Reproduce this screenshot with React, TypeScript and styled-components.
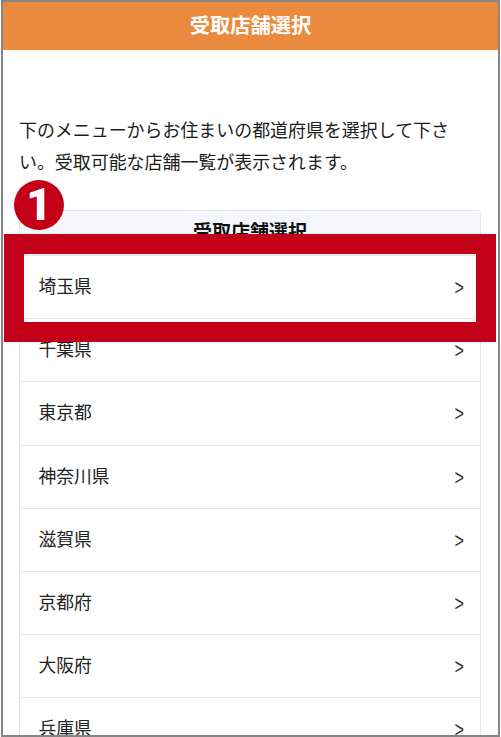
import React from 'react';
import styled, { createGlobalStyle } from 'styled-components';

const GlobalStyle = createGlobalStyle`
  html, body {
    margin: 0;
    padding: 0;
    background: #fff;
    font-family: "Liberation Sans", "Noto Sans CJK JP", sans-serif;
  }
`;

const prefectures = ['埼玉県', '千葉県', '東京都', '神奈川県', '滋賀県', '京都府', '大阪府', '兵庫県'];

export default function App() {
  return (
    <>
      <GlobalStyle />
      <Page>
        <Frame>
          <Header>受取店舗選択</Header>
          <Content>
            <Lead>下のメニューからお住まいの都道府県を選択して下さい。受取可能な店舗一覧が表示されます。</Lead>
            <Card>
              <CardTitle>受取店舗選択</CardTitle>
              {prefectures.map((name) => (
                <Row key={name}>
                  <span>{name}</span>
                  <Arrow>&gt;</Arrow>
                </Row>
              ))}
            </Card>
          </Content>
        </Frame>
        <Highlight />
        <StepBadge>1</StepBadge>
      </Page>
    </>
  );
}

const Page = styled.div`
  position: relative;
  width: 501px;
  height: 737px;
  overflow: hidden;
  background: #fff;
`;

const Frame = styled.div`
  box-sizing: border-box;
  width: 499px;
  height: 737px;
  margin-left: 1px;
  border: 2px solid #858585;
  overflow: hidden;
`;

const Header = styled.div`
  height: 48px;
  background: #ea8a3e;
  color: #fff;
  font-size: 20.3px;
  font-weight: 700;
  line-height: 48px;
  text-align: center;
`;

const Content = styled.div`
  padding: 65px 17px 0 16px;
`;

const Lead = styled.p`
  margin: 0 0 31px;
  padding-right: 6px;
  font-size: 17.95px;
  line-height: 32px;
  color: #1c1c1c;
`;

const Card = styled.div`
  border: 1px solid #e6e6e9;
  border-bottom: 0;
  border-radius: 3px 3px 0 0;
`;

const CardTitle = styled.div`
  height: 44px;
  background: #f4f6fc;
  color: #111;
  font-size: 19px;
  font-weight: 700;
  line-height: 43px;
  text-align: center;
`;

const Row = styled.div`
  box-sizing: border-box;
  display: flex;
  align-items: center;
  justify-content: space-between;
  height: 63.2px;
  padding: 0 15px 4px 18.5px;
  border-top: 1px solid #e6e6e9;
  font-size: 17.8px;
  color: #222;
`;

const Arrow = styled.span`
  display: inline-block;
  margin-top: 7px;
  font-size: 18px;
  color: #333;
  transform: scale(0.9, 1.25);
`;

const Highlight = styled.div`
  position: absolute;
  box-sizing: border-box;
  left: 4px;
  top: 234px;
  width: 492px;
  height: 108px;
  border: 20px solid #c40018;
`;

const StepBadge = styled.div`
  position: absolute;
  left: 14px;
  top: 180px;
  width: 50px;
  height: 50px;
  border-radius: 50%;
  background: #c40018;
  color: #fff;
  font-family: Roboto, sans-serif;
  font-size: 44px;
  font-weight: 900;
  line-height: 51px;
  text-align: center;
`;
